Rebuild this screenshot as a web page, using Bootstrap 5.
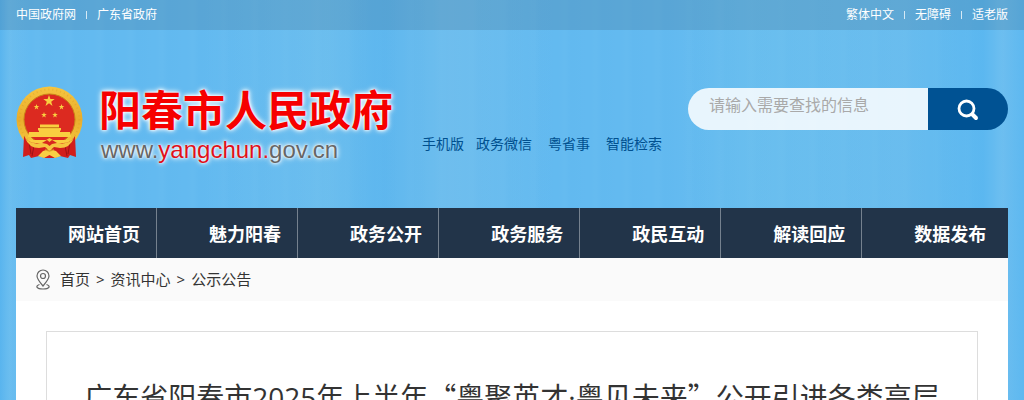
<!DOCTYPE html>
<html lang="zh-CN">
<head>
<meta charset="utf-8">
<meta name="viewport" content="width=device-width, initial-scale=1">
<title>阳春市人民政府</title>
<link href="https://cdn.jsdelivr.net/npm/bootstrap@5.3.0/dist/css/bootstrap.min.css" rel="stylesheet">
<style>
body {
  font-family: "Open Sans", "Noto Sans CJK SC", sans-serif;
  font-size: 14px;
  color: #333;
  background:
    linear-gradient(90deg, rgba(70,170,235,.35) 0, rgba(130,200,238,.25) 1%, transparent 3%, transparent 20%, rgba(125,198,235,.35) 32%, rgba(80,175,235,.3) 37%, rgba(125,195,235,.45) 44%, transparent 54%, transparent 66%, rgba(120,200,235,.3) 74%, rgba(120,195,235,.3) 88%, rgba(80,180,240,.4) 96%, rgba(130,200,240,.3) 98%, rgba(80,180,240,.3) 100%),
    repeating-linear-gradient(90deg, rgba(255,255,255,0) 0, rgba(255,255,255,.015) 7px, rgba(0,110,200,.01) 13px, rgba(255,255,255,0) 31px),
    #63baf0;
}
a { color: inherit; text-decoration: none; }
.page-gutter { padding-left: 16px; padding-right: 16px; }
.topbar { height: 30px; font-size: 12px; color: #fff; background: rgba(50,80,100,.18); }
.topbar a + a::before { content: ""; display: inline-block; width: 1px; height: 8px; margin: 0 10px; background: #d5e9f5; }
.masthead { padding-top: 56px; height: 178px; }
.site-name { font-size: 42px; line-height: 48px; font-weight: 700; color: #f60000; text-shadow: 0 0 2px #fff, 0 0 4px #fff, 0 0 6px #fff; }
.site-url { font-family: "Liberation Sans", sans-serif; font-size: 24px; line-height: 32px; padding-left: 2px; color: #666; text-shadow: 0 0 2px #fff, 0 0 4px #fff, 0 0 6px #fff; }
.site-url b { font-weight: 400; color: #e0101a; }
.quick-links { color: #00508f; line-height: 20px; padding-top: 48px; margin-left: 29px; }
.search-form { width: 320px; height: 42px; margin-top: 2px; border-radius: 21px; overflow: hidden; }
.search-form input { min-width: 0; border: 0; outline: 0; background: rgba(255,255,255,.85); padding: 0 20px 8px 21px; font-size: 16px; color: #555; }
.search-form input::placeholder { color: #a9a9a9; opacity: 1; }
.search-form button { width: 80px; border: 0; background: #005293; }
.main-nav { background: #223449; height: 50px; }
.main-nav li { width: 14.22%; padding-left: 52px; border-right: 1px solid #75818e; }
.main-nav li:last-child { flex: 1; border-right: 0; }
.main-nav a { font-size: 18px; line-height: 52px; font-weight: 700; color: #fff; white-space: nowrap; }
.crumbs { height: 43px; padding-left: 20px; font-size: 15px; background: #fafafa; }
.crumbs svg { margin-right: 10px; }
.crumbs span { margin: 0 6px; }
.article-box { margin: 30px 30px 0; padding: 40px 30px; border: 1px solid #ddd; }
.article-box h1 { font-size: 28px; line-height: 48px; font-weight: 400; margin: 0; text-align: center; }
.wide-quote { font-family: "Noto Sans CJK SC", sans-serif; }
</style>
</head>
<body>
<div class="topbar page-gutter d-flex justify-content-between align-items-center">
  <div><a href="#">中国政府网</a><a href="#">广东省政府</a></div>
  <div><a href="#">繁体中文</a><a href="#">无障碍</a><a href="#">适老版</a></div>
</div>

<header class="masthead page-gutter d-flex align-items-start">
  <a href="#" class="d-flex flex-shrink-0" aria-label="阳春市人民政府">
    <svg width="67" height="74" viewBox="0 0 67 74" aria-hidden="true">
      <defs>
        <linearGradient id="gold" x1="0" y1="0" x2="0" y2="1"><stop offset="0" stop-color="#f6c53f"/><stop offset=".5" stop-color="#e9ad2c"/><stop offset="1" stop-color="#f8cf45"/></linearGradient>
        <path id="star" d="M0-6 1.4-1.9H5.7L2.2.7 3.5 4.9 0 2.3-3.5 4.9-2.2.7-5.7-1.9H-1.4Z"/>
      </defs>
      <circle cx="33.500" cy="33.500" r="33" fill="url(#gold)"/>
      <circle cx="33.500" cy="33.500" r="30" fill="none" stroke="#d69420" stroke-width="2" stroke-dasharray="1 3" opacity=".35"/>
      <circle cx="33.500" cy="33.500" r="25.500" fill="#dc2a20" stroke="#c98117"/>
      <g fill="#f9cf40"><use href="#star" x="33" y="15"/>
        <use href="#star" transform="translate(20.500 21)scale(.5)"/><use href="#star" transform="translate(45.500 21)scale(.5)"/><use href="#star" transform="translate(28 29)scale(.5)"/><use href="#star" transform="translate(39 29)scale(.5)"/>
        <path d="M24 38.500h19v3H24ZM22 42h23v2.500H22ZM25 44h17v3H25ZM13 46h10v-1.500h21V46h10l1 5H12ZM13 54h41l-3 3H16Z"/></g>
      <path d="M24 41.700h19" stroke="#c68819"/>
      <path d="M8 50q4 8 14 7l11.500 5 11.500-5q10 1 14-7l1 21-6-2-2 3-8-2-6 2H29l-6-2-8 2-2-3-6 2Z" fill="#d21e1c"/>
      <path d="M13 56l2 12M18 60l-2 10M54 56l-2 12M49 60l2 10" stroke="#9e1415"/>
      <path d="M9 52q6 7 16 5l8.500-5 8.500 5q10 2 16-5-4 10-14 10l-6-1-4.500 4-4.500-4-6 1Q13 62 9 52Z" fill="#f6c53f"/>
      <path d="m26 57 5-3 2.500 2 2.500-2 5 3-5 1-2.500 2-2.500-2Z" fill="#d8261f"/>
      <path d="m22 70 5-5 6.500-2 6.500 2 5 5-6 2-5.500-3-5.500 3Z" fill="#f8cf45"/>
      <path d="M29 63q4.500 4 9 0" fill="none" stroke="#d18c19"/>
    </svg>
    <div class="ms-3 text-nowrap">
      <div class="site-name">阳春市人民政府</div>
      <div class="site-url">www.<b>yangchun.</b>gov.cn</div>
    </div>
  </a>
  <nav class="quick-links d-flex text-nowrap" aria-label="快捷入口">
    <a href="#" class="me-2 pe-1">手机版</a><a href="#" class="me-3">政务微信</a><a href="#" class="me-3">粤省事</a><a href="#">智能检索</a>
  </nav>
  <form class="search-form d-flex flex-shrink-0 ms-auto">
    <input class="flex-grow-1" type="text" aria-label="搜索" placeholder="请输入需要查找的信息">
    <button type="button" class="flex-shrink-0 p-0" aria-label="搜索">
      <svg width="22" height="22" viewBox="0 0 22 22" fill="none" stroke="#fff" stroke-linecap="round"><circle cx="9.500" cy="9.500" r="7.500" stroke-width="2.800"/><path d="m15.500 15.500 3.500 3.500" stroke-width="4"/></svg>
    </button>
  </form>
</header>

<div class="page-gutter">
  <nav class="main-nav" aria-label="主导航">
    <ul class="list-unstyled d-flex m-0 h-100">
      <li><a href="#">网站首页</a></li><li><a href="#">魅力阳春</a></li><li><a href="#">政务公开</a></li><li><a href="#">政务服务</a></li><li><a href="#">政民互动</a></li><li><a href="#">解读回应</a></li><li><a href="#">数据发布</a></li>
    </ul>
  </nav>
  <main class="bg-white">
    <div class="crumbs d-flex align-items-center">
      <svg width="14" height="21" viewBox="0 0 14 21" fill="none" stroke="#666" stroke-width="1.200"><path d="M7 17Q1 10 1 7a6 6 0 0 1 12 0q0 3-6 10Z"/><circle cx="7" cy="7" r="2.500"/><path d="M3.500 15.500C-1 17 .5 20 7 20s8-3 3.500-4.500"/></svg>
      <a href="#">首页</a><span>&gt;</span><a href="#">资讯中心</a><span>&gt;</span><a href="#">公示公告</a>
    </div>
    <article class="article-box">
      <h1>广东省阳春市2025年上半年<span class="wide-quote">“</span>粤聚英才·粤见未来<span class="wide-quote">”</span>公开引进各类高层</h1>
    </article>
  </main>
</div>
<script src="https://cdn.jsdelivr.net/npm/bootstrap@5.3.0/dist/js/bootstrap.bundle.min.js"></script>
</body>
</html>
